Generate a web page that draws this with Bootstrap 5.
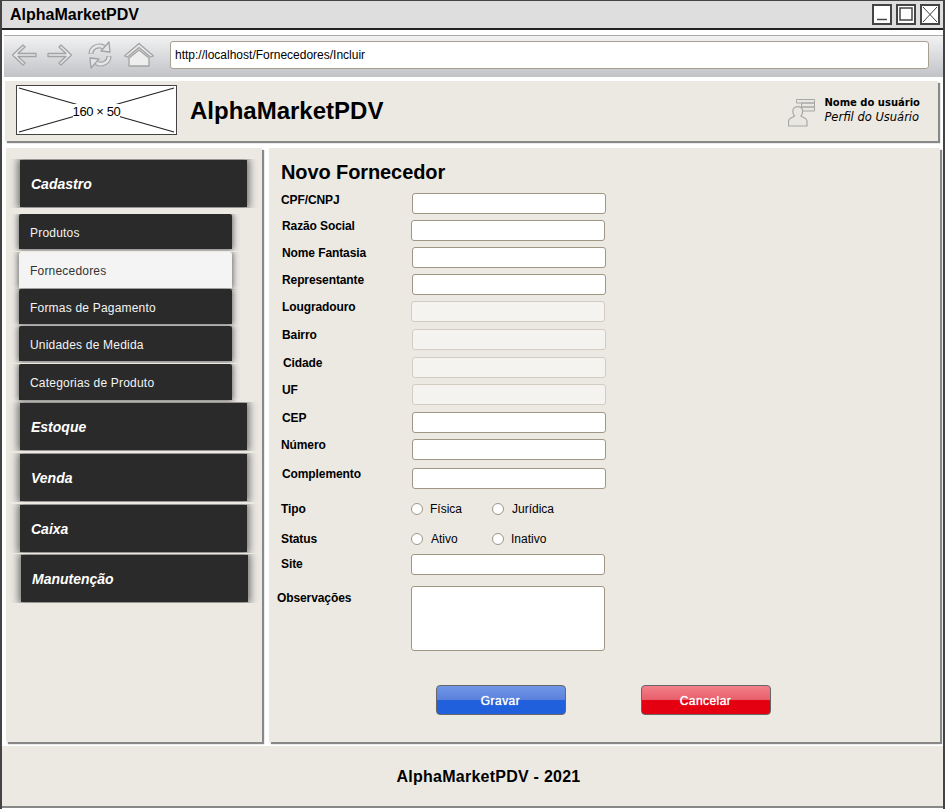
<!DOCTYPE html>
<html lang="pt-BR">
<head>
  <meta charset="UTF-8">
  <title>AlphaMarketPDV</title>
  <link href="https://cdn.jsdelivr.net/npm/bootstrap@5.3.0/dist/css/bootstrap.min.css" rel="stylesheet">
  <style>
    html, body { height: 100%; }
    body { background: #fff; font-family: "Liberation Sans", Arial, sans-serif; color: #000; overflow: hidden; }

    .win-frame { width: 945px; height: 809px; border: 2px solid #444; border-top-width: 1px; border-bottom: 0; }
    .win-title { height: 29px; background: #dedede; border-bottom: 2px solid #222; padding: 0 3px 0 8px; }
    .win-title span { font-size: 16px; font-weight: 700; }
    .win-btn { width: 20px; height: 21px; background: #fff; border: 2px solid #444; display: block; }

    .tool-bar { height: 42px; margin: 5px 0 0 2px; background: linear-gradient(#f2f2f3, #c1c3c7); border-top: 1px solid #aaa; padding: 0 0 4px 7px; }
    .nav-ico { display: block; }
    .nav-g1 { margin-left: 10px; }
    .nav-g2 { margin-left: 14px; }
    .addr-input { width: 759px; height: 28px; margin-left: 15px; background: #fff; border: 1px solid #a89f8f; border-radius: 3px; font-size: 12px; padding-left: 4px; line-height: 26px; }

    .top-panel { height: 60px; margin: 4px 5px 0 3px; background: #ece9e3; box-shadow: 2px 2px 1px #888; padding: 0 18px 2px 11px; }
    .logo-box { width: 161px; height: 50px; position: relative; background: #fff; border: 1px solid #444; }
    .logo-box svg { position: absolute; inset: 0; }
    .logo-box span { position: relative; font-size: 13px; line-height: 15px; letter-spacing: -.4px; background: #fff; margin-top: 2px; }
    .app-name { font-size: 24px; font-weight: 700; margin: 2px 0 0 13px; }
    .user-ico { margin: 6px 9px 0 0; }
    .user-name { font-family: "DejaVu Sans", sans-serif; font-size: 10px; line-height: 15px; font-weight: 700; }
    .user-role { font-family: "DejaVu Sans", sans-serif; font-size: 11.5px; line-height: 15px; font-style: italic; }

    .body-area { height: 594px; margin: 7px 3px 0 4px; gap: 7px; }
    .side-panel { width: 256px; background: #ece9e3; box-shadow: 2px 2px 1px #888; padding-top: 12px; }
    .side-head { width: 227px; height: 47px; margin-left: 14px; background: #2a2a2a; color: #fff; font-size: 14px; font-weight: 700; font-style: italic; padding: 2px 0 0 11px; box-shadow: 0 0 8px 2px #666; clip-path: inset(-1px -12px); display: flex; align-items: center; }
    .side-head.shift { margin-left: 15px; }
    .side-item { width: 213px; height: 35px; margin-left: 13px; background: #2a2a2a; color: #f4f4f4; font-size: 12px; letter-spacing: .2px; padding: 2px 0 0 11px; border-radius: 2px 2px 0 0; box-shadow: 0 0 6px 1px #666; clip-path: inset(0 -10px -2px); display: flex; align-items: center; }
    .side-item.tall { height: 36px; }
    .side-item.cur { background: #f4f4f4; color: #333; }

    .main-panel { width: 671px; background: #ece9e3; box-shadow: 2px 2px 1px #888; padding: 12px 0 0 12px; }
    .main-panel h2 { font-size: 20px; font-weight: 700; line-height: 24px; letter-spacing: -.1px; margin: 0; }
    .fld-row { display: flex; align-items: flex-start; }
    .fld-row label { flex: 0 0 131px; font-size: 12px; font-weight: 700; line-height: 14px; letter-spacing: -.1px; margin-top: -1px; }
    .fld-row input[type=text], .fld-row textarea { width: 194px; height: 21px; background: #fff; border: 1px solid #a09684; border-radius: 3px; display: block; padding: 0; }
    .fld-row input[disabled] { background: #f4f3ef; border-color: #d2ccc2; }
    .fld-row textarea { height: 65px; resize: none; }
    .fld-row .to-left { margin-left: -1px; }
    .fld-row .lb-1 { padding-left: 1px; }
    .fld-row .lb-2 { padding-left: 2px; }
    .fld-row .lb-out { margin-left: -4px; flex-basis: 135px; }
    .fld-row .lt-0 { margin-top: 0; }
    .fld-row .lt-3 { margin-top: 3px; }
    .fld-row .lt-5 { margin-top: 5px; }

    .vg-1 { margin-top: 1px; }
    .vg-2 { margin-top: 2px; }
    .vg-3 { margin-top: 3px; }
    .vg-6 { margin-top: 6px; }
    .vg-7 { margin-top: 7px; }
    .vg-8 { margin-top: 8px; }
    .vg-9 { margin-top: 9px; }
    .vg-11 { margin-top: 11px; }
    .vg-13 { margin-top: 13px; }
    .vg-16 { margin-top: 16px; }
    .vg-34 { margin-top: 34px; }

    .opt-group { display: flex; font-size: 12px; line-height: 14px; margin-left: -1px; color: #000; }
    .opt-pick { width: 81px; display: flex; align-items: center; }
    .opt-dot { width: 12px; height: 12px; margin-right: 7px; border: 1px solid #a09684; border-radius: 50%; background: #fff; display: block; }
    .opt-pick.wide .opt-dot { margin-right: 8px; }

    .act-row { padding-left: 155px; gap: 75px; }
    .act-btn { width: 130px; height: 30px; border: 1px solid #666; border-radius: 4px; color: #fff; font-size: 12px; letter-spacing: .45px; text-align: center; line-height: 30px; text-shadow: 0 0 1px #fff; padding-right: 1px; }
    .act-save { background: linear-gradient(#7096e6 0, #5a82dc 48%, #2060dc 52%, #2060dc 100%); }
    .act-cancel { background: linear-gradient(#f28089 0, #e8606c 48%, #e40010 52%, #e40010 100%); }

    .foot-bar { height: 62px; margin-top: 4px; background: #ece9e3; border-bottom: 2px solid #888; font-size: 16px; font-weight: 700; letter-spacing: .25px; padding: 2px 0 0 32px; }
  </style>
</head>
<body>
  <div class="win-frame">
    <!-- Window title -->
    <div class="win-title d-flex align-items-center justify-content-between">
      <span>AlphaMarketPDV</span>
      <div class="d-flex gap-1">
        <svg class="win-btn" viewBox="0 0 16 17"><path d="M3 13.5h10" stroke="#444" stroke-width="1.5"/></svg>
        <svg class="win-btn" viewBox="0 0 16 17"><rect x="2" y="2" width="12" height="12" fill="none" stroke="#444" stroke-width="1.5"/></svg>
        <svg class="win-btn" viewBox="0 0 16 17"><path d="M1 1l14 15M15 1L1 16" stroke="#444" stroke-width="1"/></svg>
      </div>
    </div>

    <!-- Browser bar -->
    <div class="tool-bar d-flex align-items-center">
      <svg class="nav-ico" width="26" height="26" viewBox="0 0 26 26"><path d="M1.5 13L12 3l2 2-7 6.500h18v3H7l7 6.500-2 2z" fill="#e6e7e8" stroke="#a3a3a3" stroke-width="1.3" stroke-linejoin="round"/></svg>
      <svg class="nav-ico nav-g1" width="26" height="26" viewBox="0 0 26 26"><path d="M24.500 13L14 3l-2 2 7 6.500H1v3h18l-7 6.500 2 2z" fill="#e6e7e8" stroke="#a3a3a3" stroke-width="1.300" stroke-linejoin="round"/></svg>
      <svg class="nav-ico nav-g2" width="26" height="28" viewBox="0 0 26 28">
        <g id="syncArc" stroke-linejoin="round">
          <path d="M4 13C4 7 10 3 17 6" fill="none" stroke="#a3a3a3" stroke-width="5"/>
          <path d="M22 1L23 11 14 10z" fill="#e4e5e6" stroke="#a3a3a3" stroke-width="1.300"/>
          <path d="M4 12.400C4 7 10 3 16.500 6" fill="none" stroke="#e4e5e6" stroke-width="2.600"/>
        </g>
        <use href="#syncArc" transform="rotate(180 13 14)"/>
      </svg>
      <svg class="nav-ico nav-g1" width="32" height="26" viewBox="0 0 32 26"><path d="M1.500 14L16 1.500 30.500 14l-3 1L16 5.500 4.500 15z" fill="#e8e9ea" stroke="#a3a3a3" stroke-width="1.300" stroke-linejoin="round"/><path d="M6 16L16 8l10 8v8H6z" fill="#eeeeee" stroke="#a3a3a3" stroke-width="1.300" stroke-linejoin="round"/></svg>
      <div class="addr-input">http://localhost/Fornecedores/Incluir</div>
    </div>

    <!-- Page header -->
    <div class="top-panel d-flex align-items-center">
      <div class="logo-box d-flex align-items-center justify-content-center">
        <svg width="159" height="48" viewBox="0 0 159 48"><path d="M2 2l155 44M157 2L2 46" stroke="#222" stroke-width="1.200"/></svg>
        <span>160 × 50</span>
      </div>
      <div class="app-name flex-grow-1">AlphaMarketPDV</div>
      <svg class="user-ico" width="27" height="28" viewBox="0 0 27 28"><path d="M8.500 .5h18v3.500h-18zM13.500 4h13v4h-13zM13.500 8h13v4h-13z" fill="#e9e7e2" stroke="#a8a8a4" stroke-width="1"/><path d="M.5 27v-5c0-3 5-4 6-5-2-2-2.500-7 0-8.500 2-1 5-1 6.500 0 2.500 1.500 2 6.500 0 8.500 1 1 6 2 6 5v5z" fill="#e9e7e2" stroke="#a8a8a4" stroke-width="1.200"/></svg>
      <div>
        <div class="user-name">Nome do usuário</div>
        <div class="user-role">Perfil do Usuário</div>
      </div>
    </div>

    <div class="body-area d-flex">
      <!-- Menu -->
      <div class="side-panel">
        <div class="side-head">Cadastro</div>
        <div class="side-item vg-7">Produtos</div>
        <div class="side-item tall vg-3 cur">Fornecedores</div>
        <div class="side-item vg-1">Formas de Pagamento</div>
        <div class="side-item vg-2">Unidades de Medida</div>
        <div class="side-item tall vg-3">Categorias de Produto</div>
        <div class="side-head vg-3">Estoque</div>
        <div class="side-head mt-1">Venda</div>
        <div class="side-head mt-1">Caixa</div>
        <div class="side-head shift vg-3">Manutenção</div>
      </div>

      <!-- Form -->
      <div class="main-panel">
        <h2>Novo Fornecedor</h2>
        <div class="fld-row vg-9"><label class="lt-0">CPF/CNPJ</label><input type="text"></div>
        <div class="fld-row vg-6"><label class="lb-1">Razão Social</label><input class="to-left" type="text"></div>
        <div class="fld-row vg-6"><label class="lb-1">Nome Fantasia</label><input type="text"></div>
        <div class="fld-row vg-6"><label class="lb-1">Representante</label><input type="text"></div>
        <div class="fld-row vg-6"><label class="lb-1">Lougradouro</label><input class="to-left" type="text" disabled></div>
        <div class="fld-row vg-7"><label class="lb-1">Bairro</label><input type="text" disabled></div>
        <div class="fld-row vg-7"><label class="lb-2">Cidade</label><input type="text" disabled></div>
        <div class="fld-row vg-6"><label class="lb-1">UF</label><input type="text" disabled></div>
        <div class="fld-row vg-7"><label class="lb-1">CEP</label><input type="text"></div>
        <div class="fld-row vg-6"><label>Número</label><input type="text"></div>
        <div class="fld-row vg-8"><label class="lb-1">Complemento</label><input type="text"></div>
        <div class="fld-row vg-13"><label class="lt-0">Tipo</label>
          <div class="opt-group">
            <div class="opt-pick"><i class="opt-dot"></i><span>Física</span></div>
            <div class="opt-pick wide"><i class="opt-dot"></i><span>Jurídica</span></div>
          </div>
        </div>
        <div class="fld-row vg-16"><label class="lt-0">Status</label>
          <div class="opt-group">
            <div class="opt-pick wide"><i class="opt-dot"></i><span>Ativo</span></div>
            <div class="opt-pick"><i class="opt-dot"></i><span>Inativo</span></div>
          </div>
        </div>
        <div class="fld-row vg-8"><label class="lt-3">Site</label><input class="to-left" type="text"></div>
        <div class="fld-row vg-11"><label class="lb-out lt-5">Observações</label><textarea class="to-left"></textarea></div>
        <div class="act-row d-flex vg-34">
          <div class="act-btn act-save">Gravar</div>
          <div class="act-btn act-cancel">Cancelar</div>
        </div>
      </div>
    </div>

    <div class="foot-bar d-flex align-items-center justify-content-center">AlphaMarketPDV - 2021</div>
  </div>
</body>
</html>
